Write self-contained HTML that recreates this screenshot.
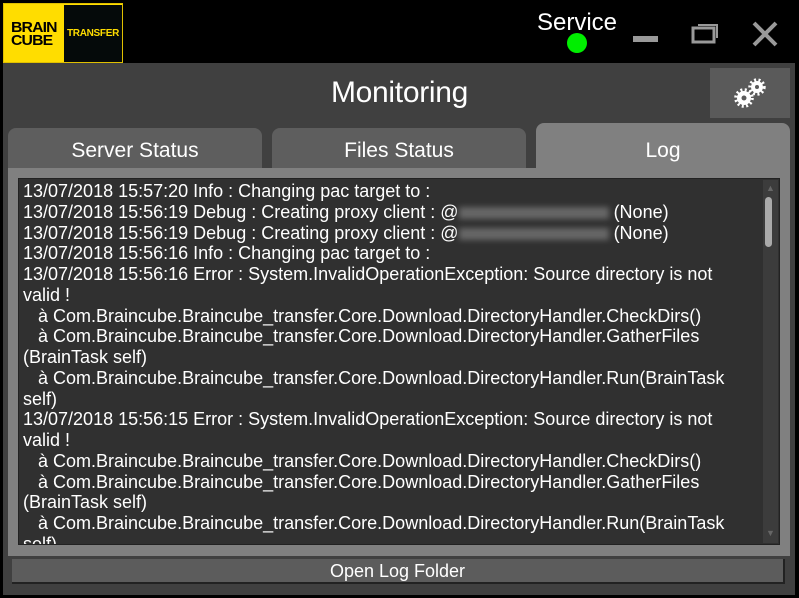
<!DOCTYPE html>
<html><head><style>
body{margin:0;width:799px;height:598px;background:#000;overflow:hidden;font-family:"Liberation Sans",Arial,sans-serif;position:relative}
.a{position:absolute}
.logo{left:3px;top:3px;width:120px;height:60px;background:#ffdd00;box-sizing:border-box;border:1px solid #e0c000}
.logo .b{position:absolute;left:7px;top:17px;font:900 15px/13px "Liberation Sans";color:#000;letter-spacing:-0.8px;transform:scaleX(1.05);transform-origin:left}
.logo .t{position:absolute;left:60px;top:1px;width:58px;height:57px;background:#050a0a;color:#ffdd00;font:bold 10px/57px "Liberation Sans";text-align:center;letter-spacing:-0.3px}
.panel{left:3px;top:63px;width:792px;height:532px;background:#404040}
.tab{top:128px;height:42px;border-radius:8px 8px 0 0;background:#5e5e5e;color:#fff;font-size:21px;text-align:center;line-height:46px}
.log{left:18px;top:178px;width:762px;height:367px;background:#303030;border:1px solid #222;box-sizing:border-box;color:#fff;font-size:18px;line-height:20.75px;padding:2px 0 0 4px;overflow:hidden;white-space:pre}
.blur{display:inline-block;width:150px;height:12px;background:#666;filter:blur(3px);vertical-align:middle}
</style></head><body>
<div class="a logo"><div class="b">BRAIN<br>CUBE</div><div class="t">TRANSFER</div></div>
<div class="a" style="left:537px;top:9px;color:#fff;font-size:24px">Service</div>
<div class="a" style="left:567px;top:33px;width:20px;height:20px;border-radius:50%;background:#00ee00"></div>
<div class="a" style="left:633px;top:36px;width:25px;height:6px;background:#999"></div>
<svg class="a" style="left:690px;top:22px" width="30" height="22"><rect x="3" y="6" width="21" height="14" fill="none" stroke="#999" stroke-width="3"/><path d="M8 3H27V16" fill="none" stroke="#999" stroke-width="2"/></svg>
<svg class="a" style="left:752px;top:21px" width="26" height="26"><path d="M2 2L24 24M24 2L2 24" stroke="#999" stroke-width="4"/></svg>
<div class="a panel"></div>
<div class="a" style="left:0;top:76px;width:799px;text-align:center;color:#fff;font-size:30px;letter-spacing:-0.3px">Monitoring</div>
<div class="a" style="left:710px;top:68px;width:80px;height:50px;background:#5a5a5a"></div>
<svg class="a" style="left:733px;top:76px" width="34" height="34"><g fill="#fff"><circle cx="11" cy="22" r="7"/><circle cx="24" cy="11" r="6"/></g><g fill="#5a5a5a"><circle cx="11" cy="22" r="2.5"/><circle cx="24" cy="11" r="2"/></g><g stroke="#fff" stroke-width="3" stroke-dasharray="2 2.4"><circle cx="11" cy="22" r="8.3" fill="none"/><circle cx="24" cy="11" r="7.2" fill="none"/></g></svg>
<div class="a tab" style="left:8px;width:254px">Server Status</div>
<div class="a tab" style="left:272px;width:254px">Files Status</div>
<div class="a tab" style="left:536px;width:254px;top:123px;height:47px;background:#808080;line-height:56px">Log</div>
<div class="a" style="left:8px;top:168px;width:782px;height:388px;background:#808080"></div>
<div class="a log">13/07/2018 15:57:20 Info : Changing pac target to :
13/07/2018 15:56:19 Debug : Creating proxy client : @<span class="blur"></span> (None)
13/07/2018 15:56:19 Debug : Creating proxy client : @<span class="blur"></span> (None)
13/07/2018 15:56:16 Info : Changing pac target to :
13/07/2018 15:56:16 Error : System.InvalidOperationException: Source directory is not
valid !
   à Com.Braincube.Braincube_transfer.Core.Download.DirectoryHandler.CheckDirs()
   à Com.Braincube.Braincube_transfer.Core.Download.DirectoryHandler.GatherFiles
(BrainTask self)
   à Com.Braincube.Braincube_transfer.Core.Download.DirectoryHandler.Run(BrainTask
self)
13/07/2018 15:56:15 Error : System.InvalidOperationException: Source directory is not
valid !
   à Com.Braincube.Braincube_transfer.Core.Download.DirectoryHandler.CheckDirs()
   à Com.Braincube.Braincube_transfer.Core.Download.DirectoryHandler.GatherFiles
(BrainTask self)
   à Com.Braincube.Braincube_transfer.Core.Download.DirectoryHandler.Run(BrainTask
self)</div>
<div class="a" style="left:763px;top:180px;width:15px;height:363px;background:#3c3c3c"></div>
<div class="a" style="left:765px;top:197px;width:7px;height:50px;border-radius:4px;background:#aaa"></div>
<div class="a" style="left:766px;top:183px;color:#666;font-size:9px">▲</div>
<div class="a" style="left:766px;top:528px;color:#666;font-size:9px">▼</div>
<div class="a" style="left:12px;top:559px;width:773px;height:25px;background:#5c5c5c;border-bottom:2px solid #222;border-right:2px solid #222;box-sizing:border-box;color:#fff;font-size:18px;text-align:center;line-height:24px">Open Log Folder</div>
</body></html>
